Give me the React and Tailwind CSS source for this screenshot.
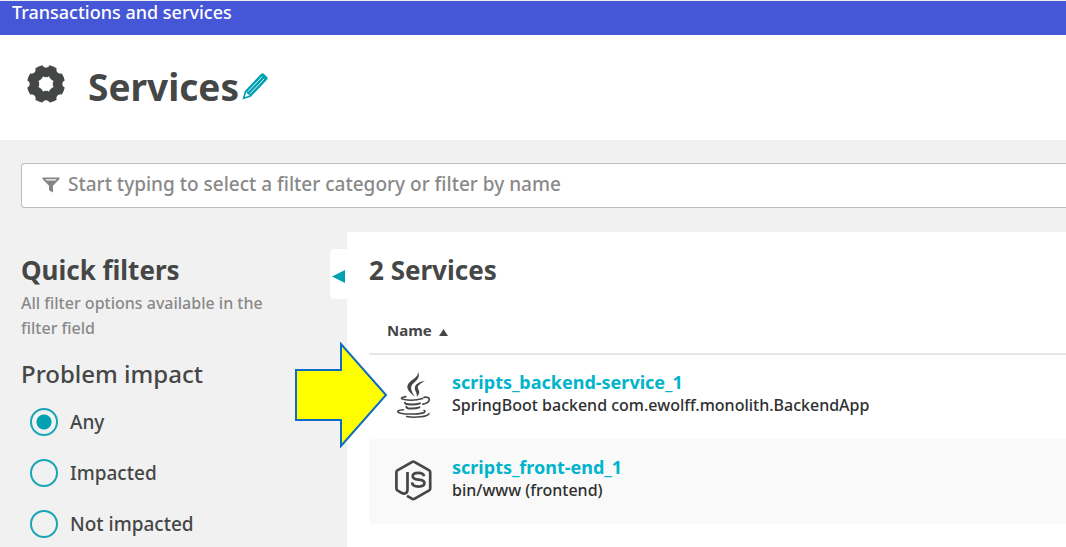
const impacts = ["Any", "Impacted", "Not impacted"];

const services = [
  {
    name: "scripts_backend-service_1",
    detail: "SpringBoot backend com.ewolff.monolith.BackendApp",
    Icon: JavaIcon,
  },
  {
    name: "scripts_front-end_1",
    detail: "bin/www (frontend)",
    Icon: NodeIcon,
  },
];

function GearIcon() {
  const notches = [0, 45, 90, 135, 180, 225, 270, 315];
  return (
    <svg viewBox="0 0 40 40" className="size-10 shrink-0" aria-hidden="true">
      <mask id="gear-mask">
        <circle cx="20" cy="20" r="19" fill="#fff" />
        <circle cx="20" cy="20" r="7" fill="#000" />
        {notches.map((a) => (
          <g key={a} transform={`rotate(${a} 20 20)`}>
            <path d="M16 0H24L22.8 2.6Q20 4.8 17.2 2.6Z" fill="#000" />
            <circle cx="20" cy="13.2" r="1.1" fill="#000" transform="rotate(22.5 20 20)" />
          </g>
        ))}
      </mask>
      <rect width="40" height="40" fill="#454646" mask="url(#gear-mask)" />
    </svg>
  );
}

function PencilIcon() {
  return (
    <svg viewBox="0 0 28 28" className="size-7" aria-hidden="true">
      <g transform="translate(1.4 26.6) rotate(-46.5)">
        <path d="M0 0L8 -4.2H31Q33.5 -4.2 33.5 -2V2Q33.5 4.2 31 4.2H8Z" fill="#00a1b2" />
        <path d="M4 -0.3L8.2 -2.4L7.6 0L8.2 2.4L4 0.4Z" fill="#fff" />
        <path d="M9.5 -1.5H30M9.5 1.5H30" stroke="#fff" strokeWidth="0.8" />
      </g>
    </svg>
  );
}

function FilterIcon() {
  return (
    <svg viewBox="0 0 18 16" className="h-4 w-[18px] shrink-0" aria-hidden="true">
      <path
        d="M0.5 0.5H17.5V2L11 8.8V15.5L7 13.2V8.8L0.5 2ZM3.4 2.2L4.6 3.6H13.4L14.6 2.2Z"
        fill="#858585"
        fillRule="evenodd"
      />
    </svg>
  );
}

function JavaIcon() {
  return (
    <svg viewBox="0 0 40 50" className="mx-auto h-[50px] w-10" fill="#454646" aria-hidden="true">
      <path d="M25 1.8C27.2 6.6 25 9.4 21 12.8C17.2 16 16.8 19 21.8 26.6C16 22.4 12.4 18 15.4 13.6C18.4 9.6 25.6 7.4 25 1.8Z" />
      <path d="M32 10.8C27.6 13.4 24.6 15.6 24.8 17.8C25.2 20.4 28.4 22.4 23.8 27C24.6 23.2 21.8 21.4 21.8 18C21.8 14.4 26.2 11.8 32 10.8Z" />
      <g fill="none" stroke="#454646" strokeLinecap="round">
        <path d="M12.8 26.6C8.6 27.4 7 28.4 10 29.2C15 30.4 24 30.2 29.6 28.6" strokeWidth="1.6" />
        <path d="M31 27.4C37.8 25.8 38.6 32.2 30 34.2" strokeWidth="1.7" />
        <path d="M12 32.8C11.8 35 22.4 35 27 33.4" strokeWidth="2" />
        <path d="M13.4 36.8C13.6 39.2 22 39 26.4 37.4" strokeWidth="2" />
        <path d="M10.4 39.8C4.8 40 2.6 41.8 7.6 43.2C15.4 44.8 28.6 44 31.6 42.2C32.6 41.4 31.8 40.8 31 40.4" strokeWidth="1.6" />
        <path d="M13.6 46.6C22 47.8 34.6 47 36 43.6" strokeWidth="1.5" />
      </g>
    </svg>
  );
}

function NodeIcon() {
  return (
    <svg viewBox="0 0 40 42" className="mx-auto h-[42px] w-10" fill="none" stroke="#454646" strokeWidth="2.7" strokeLinejoin="round" aria-hidden="true">
      <path d="M14.5 13V30.5C14.5 34.5 11.5 35.3 8.5 33.8L4.4 31.4Q3.4 30.8 3.4 29.6V13.2Q3.4 12 4.4 11.4L19.3 2.8Q20.3 2.2 21.3 2.8L36.2 11.4Q37.2 12 37.2 13.2V29.6Q37.2 30.8 36.2 31.4L21.3 39.9Q20.3 40.5 19.3 39.9L14 36.8" />
      <path d="M31 17.3C30.6 14.6 28.6 13.8 25.2 13.8C21.7 13.8 19.7 15 19.7 17.2C19.7 19.6 21.5 20.2 25.4 20.6C29.5 21 31.5 21.7 31.5 24.1C31.5 26.5 29.2 27.6 25.5 27.6C21.5 27.6 19.2 26.5 19 23.4" />
    </svg>
  );
}

export default function App() {
  return (
    <div className="flex min-h-screen flex-col overflow-x-hidden bg-[#f1f1f1] font-['Noto_Sans',sans-serif] font-medium text-[#454646]">
      <nav className="mt-px h-[34px] bg-[#4556d7] px-3">
        <a href="#transactions" className="block text-lg leading-[22px] text-white">
          Transactions and services
        </a>
      </nav>

      <header className="flex h-[105px] items-center bg-white px-[26px] pb-2">
        <GearIcon />
        <h1 className="ml-[22px] pt-1.5 text-[37px] leading-10 font-bold">Services</h1>
        <button type="button" aria-label="Edit title" className="ml-0.5 pt-1.5">
          <PencilIcon />
        </button>
      </header>

      <div className="pt-[23px] pl-[21px]">
        <label className="flex h-[45px] items-center gap-2 rounded-l-[4px] border border-r-0 border-[#bdbdbd] bg-white pb-0.5 pl-5">
          <FilterIcon />
          <input
            type="text"
            aria-label="Filter services"
            placeholder="Start typing to select a filter category or filter by name"
            className="min-w-0 flex-1 bg-transparent text-[19px] font-medium outline-none placeholder:text-[#898989]"
          />
        </label>
      </div>

      <div className="flex flex-1 pt-6">
        <aside className="w-[330px] shrink-0 pt-[22px] pr-12 pl-[21px]">
          <h2 className="text-[26px] leading-8 font-bold">Quick filters</h2>
          <p className="mt-[5px] text-base leading-[25px] text-[#898989]">
            All filter options available in the filter field
          </p>
          <fieldset className="mt-[15px]">
            <legend className="text-2xl leading-9">Problem impact</legend>
            <div className="mt-4 flex flex-col gap-[23px] pl-[9px]">
              {impacts.map((label) => (
                <label key={label} className="flex items-center gap-3 text-[19px] leading-7">
                  <input
                    type="radio"
                    name="impact"
                    defaultChecked={label === "Any"}
                    className="size-7 appearance-none rounded-full border-2 border-[#1aa5b5] checked:bg-[radial-gradient(circle,#00a1b2_7px,transparent_8px)]"
                  />
                  {label}
                </label>
              ))}
            </div>
          </fieldset>
        </aside>

        <button
          type="button"
          aria-label="Collapse filters"
          className="mt-[17px] flex h-[50px] w-[17px] shrink-0 items-center justify-center rounded-l-[4px] bg-white pt-1"
        >
          <svg viewBox="0 0 13 13" className="size-[13px]" aria-hidden="true">
            <path d="M0 6.5L13 0V13Z" fill="#00a1b2" />
          </svg>
        </button>

        <main className="relative min-w-0 flex-1 bg-white pt-[22px] pl-[22px]">
          <h2 className="text-[26px] leading-8 font-bold">2 Services</h2>
          <table className="mt-[22px] w-full border-collapse">
            <thead>
              <tr className="border-b-2 border-[#e6e6e6]">
                <th colSpan={2} className="h-[46px] pl-[18px] text-left text-[15px] font-bold">
                  <button type="button" className="flex items-center gap-[7px]">
                    Name
                    <svg viewBox="0 0 9 7" className="mt-1 h-[7px] w-[9px]" aria-hidden="true">
                      <path d="M4.5 0L9 7H0Z" fill="#454646" />
                    </svg>
                  </button>
                </th>
              </tr>
            </thead>
            <tbody>
              {services.map(({ name, detail, Icon }) => (
                <tr key={name} className="h-[85px] even:bg-[#f9f9f9]">
                  <td className="w-[83px] rounded-l-[4px] pr-0 pb-1 pl-1">
                    <Icon />
                  </td>
                  <td className="pb-2">
                    <a href={`#${name}`} className="block text-lg leading-6 font-bold text-[#00b4cc]">
                      {name}
                    </a>
                    <span className="block text-base leading-[22px] text-[#2f2f2f]">{detail}</span>
                  </td>
                </tr>
              ))}
            </tbody>
          </table>

          <svg
            viewBox="0 0 94 106"
            className="pointer-events-none absolute top-[110px] -left-[53px] h-[106px] w-[94px]"
            aria-hidden="true"
          >
            <path d="M2 28H47V2L92 53L47 104V78H2Z" fill="#ffff00" stroke="#0f6cc4" strokeWidth="2" />
          </svg>
        </main>
      </div>
    </div>
  );
}
